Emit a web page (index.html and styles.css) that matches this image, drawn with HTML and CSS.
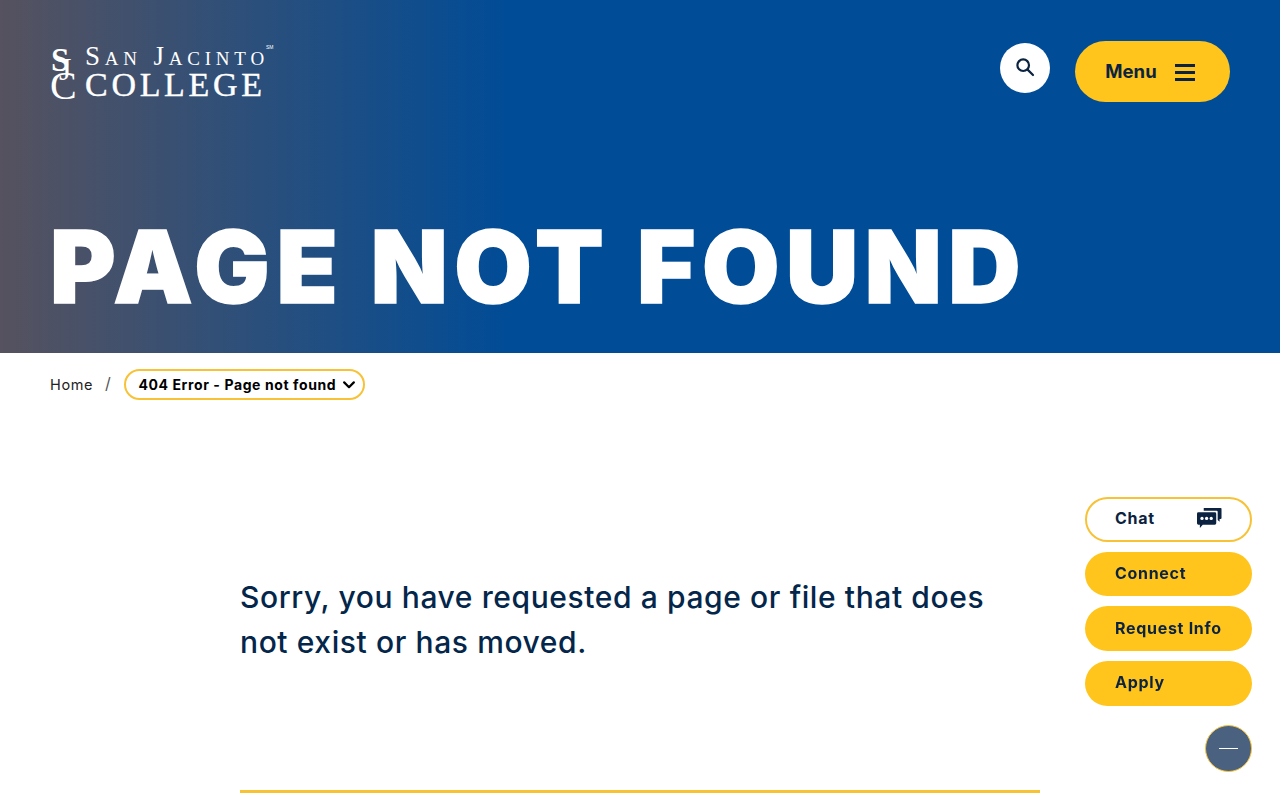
FILE: index.html
```html
<!DOCTYPE html>
<html>
<head>
  <title>Page Not Found - San Jacinto College</title>
  <link rel="stylesheet" href="styles.css">
</head>
<body>
  <header class="hero">
    <div class="top-bar">
      <a href="#" class="logo">
        <span class="logo-mark">
          <span class="mark-c">C</span>
          <span class="mark-s">S</span>
          <span class="mark-j">J</span>
        </span>
        <span class="logo-words">
          <span class="logo-line1">San Jacinto<sup>SM</sup></span>
          <span class="logo-line2">College</span>
        </span>
      </a>
      <div class="top-actions">
        <button class="search-btn" aria-label="Search">
          <svg width="20" height="20" viewBox="0 0 20 20" fill="none" stroke="#0b2340" stroke-width="2.2">
            <circle cx="8.2" cy="8.2" r="5.8"/>
            <path d="M12.6 12.6L18 18" stroke-linecap="round"/>
          </svg>
        </button>
        <button class="menu-btn">
          Menu
          <span class="burger"><i></i><i></i><i></i></span>
        </button>
      </div>
    </div>
    <h1>PAGE NOT FOUND</h1>
  </header>

  <nav class="crumbs">
    <a href="#">Home</a>
    <span class="slash">/</span>
    <button class="crumb-current">
      404 Error - Page not found
      <svg width="12" height="8" viewBox="0 0 12 8" fill="none" stroke="#000" stroke-width="2.2">
        <path d="M1.2 1.4L6 6.2l4.8-4.8" stroke-linecap="round" stroke-linejoin="round"/>
      </svg>
    </button>
  </nav>

  <main class="content">
    <p>Sorry, you have requested a page or file that does not exist or has moved.</p>
    <hr class="rule">
  </main>

  <aside class="side-links">
    <a href="#" class="side-btn chat">
      Chat
      <svg width="25" height="22" viewBox="0 0 26 22">
        <path d="M7 0.500h17.500a1 1 0 0 1 1 1V11a1 1 0 0 1-1 1H23.500v3L21.500 13V4.500a1 1 0 0 0-1-1H7z" fill="#0b2340"/>
        <path d="M1.500 5h17a1.500 1.500 0 0 1 1.500 1.500v10a1.500 1.500 0 0 1-1.500 1.500H6l-3 3.500V18H1.500A1.500 1.500 0 0 1 0 16.500v-10A1.500 1.500 0 0 1 1.500 5z" fill="#0b2340"/>
        <circle cx="5.200" cy="11.500" r="1.700" fill="#fff"/>
        <circle cx="10" cy="11.500" r="1.700" fill="#fff"/>
        <circle cx="14.800" cy="11.500" r="1.700" fill="#fff"/>
      </svg>
    </a>
    <a href="#" class="side-btn">Connect</a>
    <a href="#" class="side-btn">Request Info</a>
    <a href="#" class="side-btn">Apply</a>
    <button class="collapse-btn" aria-label="Collapse"><i></i></button>
  </aside>
</body>
</html>
```

FILE: styles.css
```css
body {
  margin: 0;
  background-color: white;
  font-family: "Inter", "Open Sans", sans-serif;
  color: #0b2340;
}

button {
  font-family: inherit;
  cursor: pointer;
}

a {
  text-decoration: none;
  color: inherit;
}

/* blue header */
.hero {
  height: 352.500px;
  box-sizing: border-box;
  padding: 41px 50px 0;
  background: linear-gradient(90deg, #56525f 0%, #004c97 40%, #004c97 100%);
  display: flex;
  flex-direction: column;
}

.top-bar {
  display: flex;
  justify-content: space-between;
  align-items: flex-start;
}

.logo {
  display: flex;
  gap: 8px;
  color: white;
  font-family: "Liberation Serif", serif;
  margin-top: 2px;
}

.logo-mark {
  position: relative;
  display: block;
  width: 27px;
  height: 56px;
  line-height: 1;
}

.logo-mark span {
  position: absolute;
}

.mark-s {
  left: 1px;
  top: 1px;
  font-size: 33px;
  font-weight: bold;
}

.mark-j {
  left: 9px;
  top: 10px;
  font-size: 32px;
}

.mark-c {
  left: 0;
  top: 23px;
  font-size: 40px;
}

.logo-words {
  display: flex;
  flex-direction: column;
}

.logo-line1 {
  font-size: 27px;
  font-variant: small-caps;
  letter-spacing: 4.800px;
  line-height: 27px;
  white-space: nowrap;
}

.logo-line1 sup {
  font-family: "Liberation Sans", sans-serif;
  font-size: 5px;
  letter-spacing: 0;
  vertical-align: 16px;
  line-height: 0;
  margin-left: -3px;
}

.logo-line2 {
  font-size: 34px;
  line-height: 30px;
  text-transform: uppercase;
  letter-spacing: 3.700px;
  font-weight: 400;
  -webkit-text-stroke: 0.400px white;
}

.top-actions {
  display: flex;
  gap: 25px;
}

.search-btn {
  width: 50px;
  height: 50px;
  margin-top: 2px;
  border: none;
  border-radius: 50%;
  background-color: white;
  display: flex;
  align-items: center;
  justify-content: center;
  padding: 0 0 2px;
}

.menu-btn {
  width: 155px;
  height: 61px;
  border: none;
  border-radius: 31px;
  background-color: #ffc51c;
  color: #0b2340;
  font-size: 18.500px;
  font-weight: 700;
  letter-spacing: 0.100px;
  display: flex;
  align-items: center;
  justify-content: center;
  gap: 18px;
  padding: 0 5px 2px 0;
}

.burger {
  display: flex;
  flex-direction: column;
  gap: 4px;
  margin-top: 3px;
}

.burger i {
  display: block;
  width: 20px;
  height: 3px;
  background-color: #0b2340;
}

h1 {
  margin: 110px 0 0;
  color: white;
  font-size: 100px;
  font-weight: 900;
  line-height: 110px;
  letter-spacing: 6.600px;
  -webkit-text-stroke: 1.500px white;
  white-space: nowrap;
}

/* breadcrumb row */
.crumbs {
  display: flex;
  align-items: center;
  padding: 16.500px 50px 0;
  font-size: 14.500px;
  letter-spacing: 0.600px;
  color: #222;
}

.slash {
  margin: -3px 13px 0 12px;
  font-size: 16px;
  color: #555;
}

.crumb-current {
  height: 31px;
  box-sizing: border-box;
  padding: 0 8px 0 12px;
  border: 2px solid #f8c237;
  border-radius: 16px;
  background-color: white;
  color: black;
  font-size: 14px;
  font-weight: 700;
  letter-spacing: 0.600px;
  display: flex;
  align-items: center;
  gap: 7px;
}

/* main message */
.content {
  width: 800px;
  margin: 0 auto;
  padding-top: 175px;
}

.content p {
  margin: 0;
  max-width: 775px;
  font-size: 30px;
  line-height: 45px;
  font-weight: 500;
  letter-spacing: 0.600px;
  color: #03264a;
}

.rule {
  margin: 125px 0 0;
  border: none;
  height: 3px;
  background-color: #f8c237;
}

/* floating buttons on the right */
.side-links {
  position: fixed;
  top: 497px;
  right: 28px;
  width: 167px;
  display: flex;
  flex-direction: column;
  gap: 10px;
}

.side-btn {
  height: 44.700px;
  box-sizing: border-box;
  padding: 0 28px 2px 30px;
  border-radius: 23px;
  background-color: #ffc51c;
  color: #0b2340;
  font-size: 16px;
  font-weight: 700;
  letter-spacing: 0.700px;
  display: flex;
  align-items: center;
  justify-content: space-between;
}

.chat {
  background-color: white;
  border: 2px solid #f8c237;
  padding: 0 28px 3px 28px;
}

.collapse-btn {
  width: 47px;
  height: 47px;
  margin: 9px 0 0 auto;
  padding: 0;
  border: 1px solid #f8c237;
  border-radius: 50%;
  background-color: #4a6180;
  display: flex;
  align-items: center;
  justify-content: center;
}

.collapse-btn i {
  display: block;
  width: 19px;
  height: 1px;
  background-color: white;
}
```
